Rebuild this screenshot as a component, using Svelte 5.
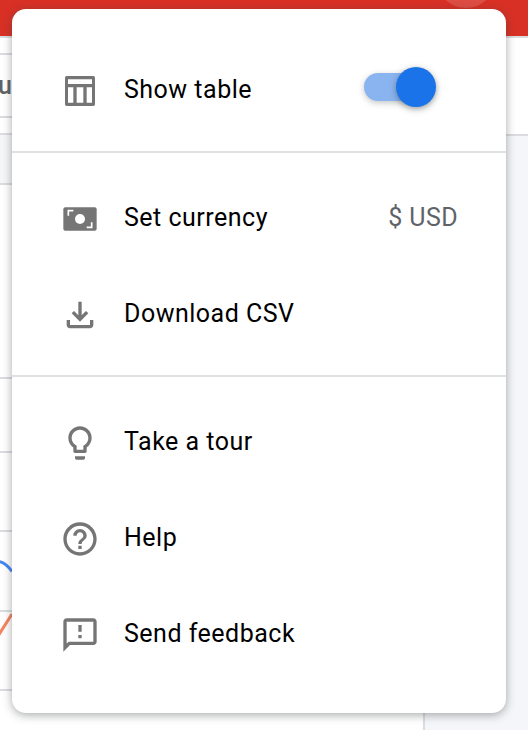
<script>
	const sections = [
		[{ label: 'Show table', icon: 'table', toggle: true }],
		[
			{ label: 'Set currency', icon: 'currency', value: '$ USD' },
			{ label: 'Download CSV', icon: 'download' }
		],
		[
			{ label: 'Take a tour', icon: 'bulb' },
			{ label: 'Help', icon: 'help' },
			{ label: 'Send feedback', icon: 'feedback' }
		]
	];

	const paths = {
		table: 'M4 3h16a1 1 0 0 1 1 1v16a1 1 0 0 1-1 1H4a1 1 0 0 1-1-1V4a1 1 0 0 1 1-1zm.8 2v2.8h14.4V5zm0 4.8V19H8V9.800zm5.200 0V19h4V9.800zm6 0V19h3.200V9.800z',
		download: 'M18 15v3H6v-3H4v3c0 1.100.9 2 2 2h12c1.100 0 2-.9 2-2v-3h-2zm-1-4-1.410-1.410L13 12.170V4h-2v8.170L8.410 9.590 7 11l5 5 5-5z',
		bulb: 'M9 21c0 .5.4 1 1 1h4c.6 0 1-.5 1-1v-1H9v1zm3-19C8.100 2 5 5.100 5 9c0 2.400 1.200 4.500 3 5.700V17c0 .5.4 1 1 1h6c.6 0 1-.5 1-1v-2.300c1.800-1.300 3-3.400 3-5.700 0-3.900-3.100-7-7-7zm2.900 11.100l-.9.6V16h-4v-2.300l-.8-.6C7.800 12.200 7 10.600 7 9c0-2.800 2.200-5 5-5s5 2.200 5 5c0 1.600-.8 3.200-2.100 4.100z',
		help: 'M11 18h2v-2h-2v2zm1-16C6.480 2 2 6.480 2 12s4.480 10 10 10 10-4.480 10-10S17.520 2 12 2zm0 18c-4.410 0-8-3.590-8-8s3.590-8 8-8 8 3.590 8 8-3.590 8-8 8zm0-14c-2.210 0-4 1.790-4 4h2c0-1.100.9-2 2-2s2 .9 2 2c0 2-3 1.750-3 5h2c0-2.250 3-2.500 3-5 0-2.210-1.790-4-4-4z',
		feedback: 'M20 2H4c-1.100 0-1.990.9-1.990 2L2 22l4-4h14c1.100 0 2-.9 2-2V4c0-1.100-.9-2-2-2zm0 14H5.170l-.59.59-.58.58V4h16v12zm-9-4h2v2h-2zm0-6h2v4h-2z'
	};

	// horizontal rules of the table behind the menu, as row heights
	const rows = [17, 63, 17, 50, 194, 74, 79, 80, 79, 39];
</script>

<div class="page">
	<header class="appbar"><span class="ripple"></span></header>
	<div class="content">
		<div class="table">
			{#each rows as height, i}
				<div class="row" class:shaded={i === 3} style="height: {height}px">
					{#if i === 1}<span class="cell">u</span>{/if}
				</div>
			{/each}
			<svg class="chart" width="12" height="90" viewBox="0 0 12 90">
				<path d="M-2 1.500c5 0 9 3 14 10" fill="none" stroke="#4285f4" stroke-width="3" />
				<path d="M-2 76L12 54" fill="none" stroke="#f4845f" stroke-width="3" />
			</svg>
		</div>
		<div class="side"><div class="side-top"></div></div>
	</div>

	<div class="menu">
		{#each sections as section, s}
			{#if s > 0}<hr />{/if}
			<ul>
				{#each section as item}
					<li>
						<svg class="icon" width="40" height="40" viewBox="0 0 24 24">
							{#if item.icon === 'currency'}
								<rect x="2" y="5" width="20" height="14" rx="1.200" fill="#757575" />
								<circle cx="12" cy="12" r="3" fill="#fff" />
								<path d="M5 10V7h3M19 14v3h-3" fill="none" stroke="#fff" />
							{:else}
								<path d={paths[item.icon]} fill="#757575" fill-rule="evenodd" />
							{/if}
						</svg>
						<span class="label">{item.label}</span>
						{#if item.value}<span class="value">{item.value}</span>{/if}
						{#if item.toggle}
							<span class="toggle"><span class="knob"></span></span>
						{/if}
					</li>
				{/each}
			</ul>
		{/each}
	</div>
</div>

<style>
	:global(body) {
		margin: 0;
		background: #fff;
	}
	.page {
		position: relative;
		width: 528px;
		height: 730px;
		overflow: hidden;
		font-family: Roboto, "Liberation Sans", sans-serif;
	}
	.appbar {
		position: relative;
		height: 36px;
		overflow: hidden;
		background: #d93025;
		border-bottom: 2px solid #dadce0;
		box-sizing: content-box;
	}
	.ripple {
		position: absolute;
		left: 436px;
		top: -52px;
		width: 60px;
		height: 60px;
		border-radius: 50%;
		background: rgba(255, 255, 255, 0.14);
	}
	.content {
		display: flex;
	}
	.table {
		position: relative;
		width: 425px;
		height: 692px;
		border-right: 2px solid #dadce0;
		box-sizing: border-box;
	}
	.row {
		box-sizing: border-box;
		border-bottom: 2px solid #dadce0;
		display: flex;
		align-items: center;
	}
	.row:nth-last-child(2) {
		border-bottom: 0;
	}
	.row.shaded {
		background: #f5f6f8;
	}
	.cell {
		margin-left: -2px;
		font-size: 25px;
		font-weight: 500;
		color: #5f6368;
	}
	.chart {
		position: absolute;
		left: 0;
		top: 522px;
	}
	.side {
		flex: 1;
		background: #f5f6f9;
	}
	.side-top {
		height: 96px;
		background: #fff;
		border-bottom: 2px solid #dadce0;
	}
	.menu {
		position: absolute;
		left: 12px;
		top: 9px;
		width: 494px;
		height: 704px;
		box-sizing: border-box;
		padding: 34px 0 30px;
		background: #fff;
		border-radius: 14px;
		box-shadow: 0 2px 10px rgba(60, 64, 67, 0.45);
	}
	ul {
		list-style: none;
		margin: 0;
		padding: 0;
	}
	hr {
		height: 2px;
		margin: 12px 0 18px;
		border: 0;
		background: #dfe1e4;
	}
	li {
		display: flex;
		align-items: center;
		height: 96px;
		padding: 0 48px;
	}
	.icon {
		flex: none;
		margin-right: 24px;
	}
	.label {
		flex: 1;
		padding-bottom: 4px;
		font-size: 25px;
		letter-spacing: 0.5px;
		color: #000;
	}
	.value {
		padding-bottom: 4px;
		font-size: 25px;
		letter-spacing: 0.4px;
		color: #5f6368;
	}
	.toggle {
		position: relative;
		width: 68px;
		height: 28px;
		margin: 0 26px 8px 0;
		border-radius: 14px;
		background: #8ab4f0;
		box-shadow: 0 2px 6px rgba(60, 64, 67, 0.3);
	}
	.knob {
		position: absolute;
		right: -4px;
		top: -6px;
		width: 40px;
		height: 40px;
		border-radius: 50%;
		background: #1a73e8;
		box-shadow: 0 2px 6px rgba(60, 64, 67, 0.5);
	}
</style>
